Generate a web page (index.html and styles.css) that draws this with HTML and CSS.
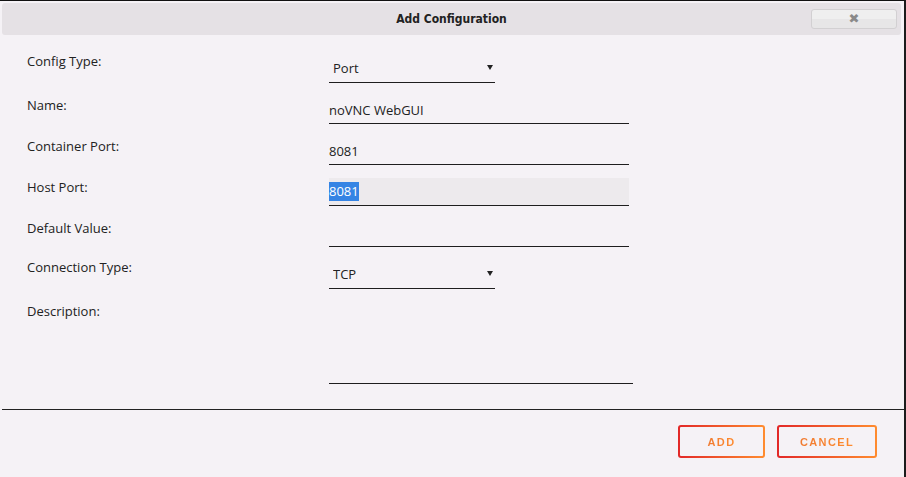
FILE: index.html
```html
<!DOCTYPE html>
<html lang="en">
<head>
    <meta charset="UTF-8">
    <title>Add Configuration</title>
    <link rel="stylesheet" href="styles.css">
</head>
<body>
    <div class="dialog">
        <div class="titlebar">
            <span class="title">Add Configuration</span>
            <button class="close" type="button">&#x2716;</button>
        </div>

        <form class="content">
            <div class="row">
                <label class="label pick">Config Type:</label>
                <div class="select">
                    <select>
                        <option>Port</option>
                        <option>Path</option>
                        <option>Variable</option>
                        <option>Label</option>
                        <option>Device</option>
                    </select>
                </div>
            </div>

            <div class="row">
                <label class="label">Name:</label>
                <input class="text" type="text" value="noVNC WebGUI">
            </div>

            <div class="row">
                <label class="label">Container Port:</label>
                <input class="text" type="text" value="8081">
            </div>

            <div class="row">
                <label class="label">Host Port:</label>
                <div class="text focused"><span class="selected">8081</span></div>
            </div>

            <div class="row">
                <label class="label">Default Value:</label>
                <input class="text" type="text" value="">
            </div>

            <div class="row gap">
                <label class="label pick">Connection Type:</label>
                <div class="select">
                    <select>
                        <option>TCP</option>
                        <option>UDP</option>
                    </select>
                </div>
            </div>

            <div class="row last">
                <label class="label">Description:</label>
                <textarea class="text area"></textarea>
            </div>
        </form>

        <div class="buttonpane">
            <button class="btn" type="button"><span>ADD</span></button>
            <button class="btn" type="button"><span>CANCEL</span></button>
        </div>
    </div>
</body>
</html>
```

FILE: styles.css
```css
body {
    margin: 0;
    background: #f5f2f6;
    font-family: "Open Sans", "Noto Sans", sans-serif;
    color: #222;
}

.dialog {
    width: 906px;
    height: 477px;
    box-sizing: border-box;
    border-top: 1px solid #111;
    border-right: 2px solid #1c1c1c;
    background: #f5f2f6;
    padding-top: 2px;
}

.titlebar {
    position: relative;
    margin: 0 3px 0 2px;
    height: 32px;
    background: #e5e1e5;
    border-radius: 3px;
    display: flex;
    align-items: center;
    justify-content: center;
}

.title {
    font-family: "DejaVu Sans Condensed", "DejaVu Sans", sans-serif;
    font-stretch: condensed;
    font-weight: bold;
    font-size: 12px;
    color: #222;
}

.close {
    position: absolute;
    right: 4px;
    top: 6px;
    width: 86px;
    height: 20px;
    padding: 0;
    border: 1px solid #d2d0d2;
    border-radius: 3px;
    background: linear-gradient(#efefef 0, #efefef 50%, #e7e6e7 50%, #e7e6e7 100%);
    color: #8a8a8a;
    font-size: 13px;
    line-height: 18px;
    font-family: "DejaVu Sans", sans-serif;
}

.content {
    padding: 19px 0 0 27px;
    margin: 0;
}

.row {
    display: flex;
    align-items: flex-start;
    margin-bottom: 13px;
}

.row.gap {
    margin-top: 4px;
}

.row.last {
    margin-bottom: 0;
}

.label {
    width: 302px;
    flex: none;
    font-size: 13px;
    line-height: 18px;
    color: #222;
}

.label.pick {
    margin-top: -2px;
}

.text {
    width: 300px;
    height: 28px;
    box-sizing: border-box;
    margin: 0;
    padding: 0;
    border: none;
    border-bottom: 1px solid #1e1e1e;
    background: transparent;
    font-family: "Open Sans", "Noto Sans", sans-serif;
    font-size: 13px;
    color: #222;
    outline: none;
}

.focused {
    background: #edeaed;
    display: flex;
    align-items: center;
}

.selected {
    background: #3584e4;
    color: #fff;
    line-height: 19px;
}

.area {
    width: 304px;
    height: 82px;
    resize: none;
}

.select {
    position: relative;
    width: 166px;
    height: 29px;
    border-bottom: 1px solid #1e1e1e;
    box-sizing: border-box;
}

.select select {
    appearance: none;
    -webkit-appearance: none;
    width: 100%;
    height: 28px;
    border: none;
    background: transparent;
    padding: 0 0 0 4px;
    font-family: "Open Sans", "Noto Sans", sans-serif;
    font-size: 13px;
    color: #222;
    outline: none;
}

.select::after {
    content: "";
    position: absolute;
    right: 2px;
    top: 11px;
    border-left: 3px solid transparent;
    border-right: 3px solid transparent;
    border-top: 5px solid #222;
    pointer-events: none;
}

.buttonpane {
    margin: 25px 0 0 2px;
    border-top: 1px solid #222;
    padding: 15px 27px 0 0;
    display: flex;
    justify-content: flex-end;
    gap: 12px;
}

.btn {
    height: 33px;
    padding: 0;
    border: 2px solid transparent;
    border-radius: 3px;
    background: linear-gradient(#f5f2f6, #f5f2f6) padding-box,
                linear-gradient(90deg, #e22828, #ff8c2f) border-box;
    font-family: "Liberation Sans", Arial, sans-serif;
    font-weight: bold;
    font-size: 11px;
    letter-spacing: 1.4px;
    cursor: pointer;
}

.btn:first-child {
    width: 87px;
}

.btn:last-child {
    width: 100px;
}

.btn span {
    background: linear-gradient(90deg, #f07a30, #ff8c2f);
    -webkit-background-clip: text;
    background-clip: text;
    color: transparent;
}
```
